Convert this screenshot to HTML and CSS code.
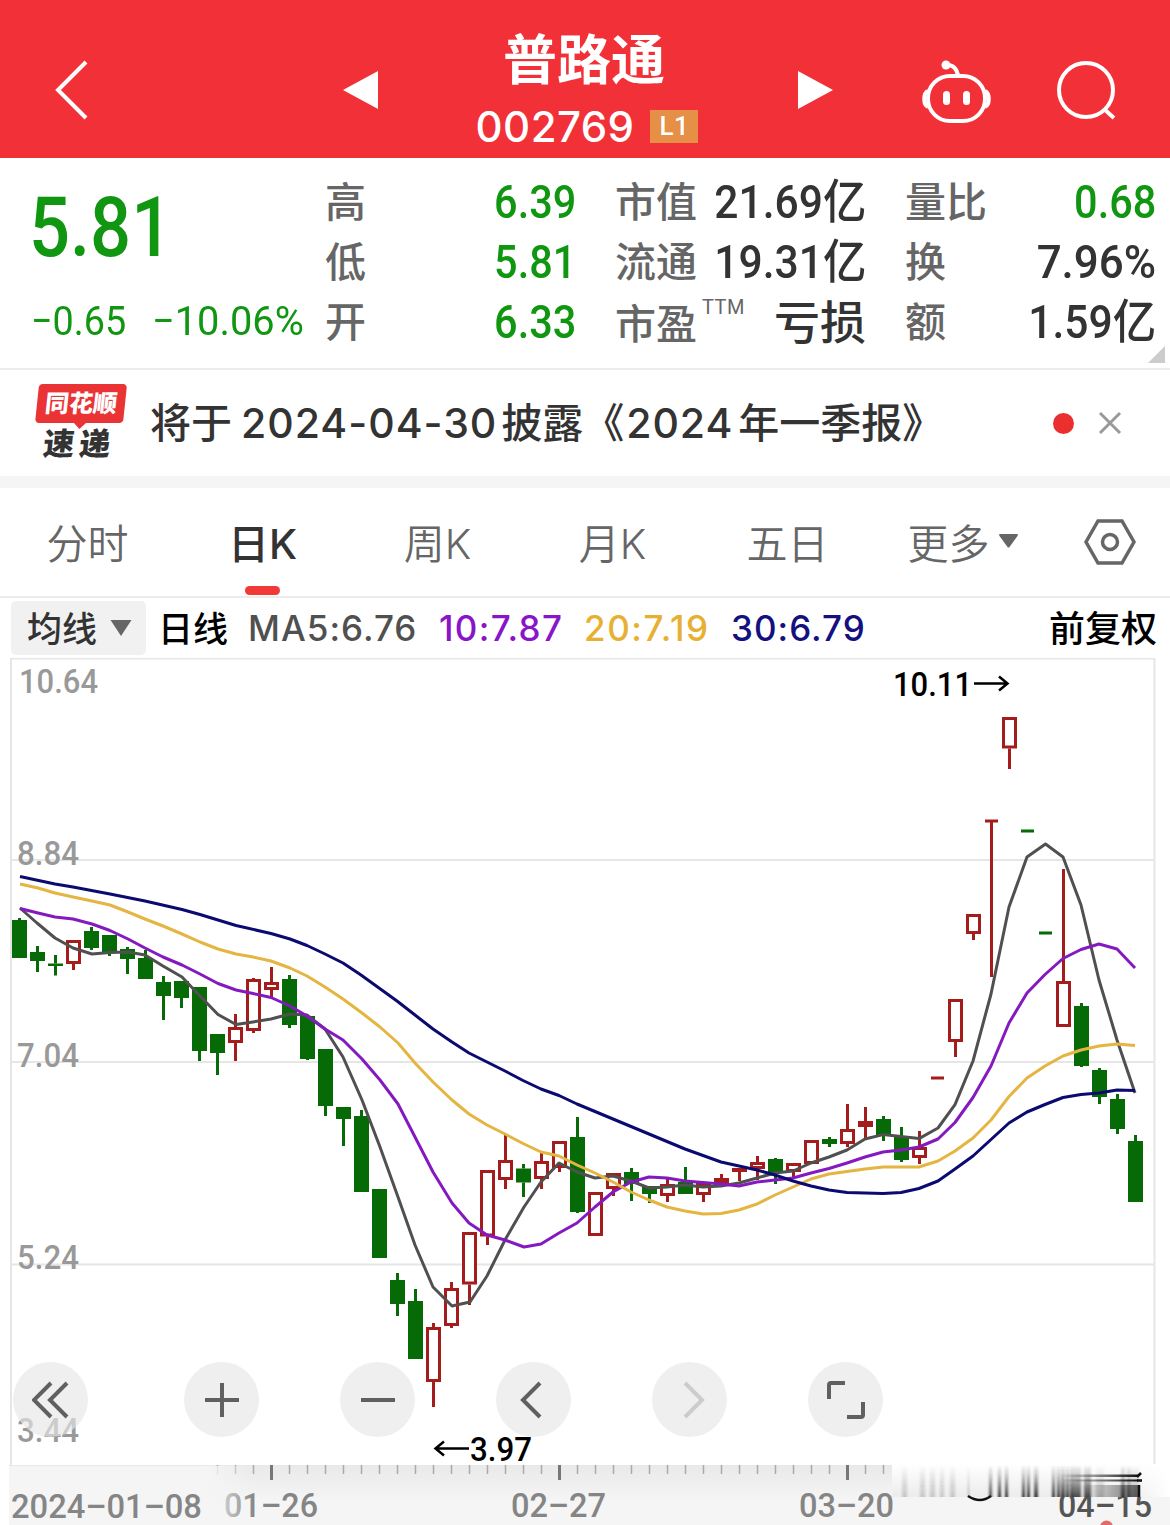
FILE: index.html
```html
<!DOCTYPE html>
<html lang="zh-CN">
<head>
    <meta charset="UTF-8">
    <meta name="viewport" content="width=device-width, initial-scale=1.0">
    <title>普路通 002769</title>
    <link rel="stylesheet" href="styles.css">
</head>
<body>
    <header class="top-bar">
        <svg class="icon-back" width="34" height="60" viewBox="0 0 34 60"><path d="M31 2 L3 30 L31 58"/></svg>
        <svg class="icon-prev" width="35" height="40" viewBox="0 0 35 40"><path d="M0 20 L35 1 V39 Z"/></svg>
        <div class="stock">
            <h1 class="stock-name">普路通</h1>
            <div class="stock-code"><span>002769</span><span class="level-badge">L1</span></div>
        </div>
        <svg class="icon-next" width="35" height="40" viewBox="0 0 35 40"><path d="M35 20 L0 1 V39 Z"/></svg>
        <svg class="icon-robot" width="72" height="66" viewBox="0 0 72 66">
            <path d="M25 6 C32 6 35 10 36 17"/>
            <rect x="6" y="17" width="57" height="45" rx="22"/>
            <path d="M6 32 C1 34 1 46 6 48 M63 32 C68 34 68 46 63 48"/>
            <circle class="fill" cx="24" cy="6" r="4.5"/>
            <rect class="fill" x="21" y="32" width="7" height="14" rx="3.5"/>
            <rect class="fill" x="41" y="32" width="7" height="14" rx="3.5"/>
        </svg>
        <svg class="icon-search" width="62" height="62" viewBox="0 0 62 62"><circle cx="29" cy="30" r="27"/><path d="M47 49 L57 58"/></svg>
    </header>

    <section class="quote">
        <div class="price-box">
            <div class="price">5.81</div>
            <div class="change"><span class="change-value">−0.65</span><span class="change-rate">−10.06%</span></div>
        </div>
        <div class="quote-col">
            <div class="quote-row"><span class="label">高</span><span class="num green">6.39</span></div>
            <div class="quote-row"><span class="label">低</span><span class="num green">5.81</span></div>
            <div class="quote-row"><span class="label">开</span><span class="num green">6.33</span></div>
        </div>
        <div class="quote-col">
            <div class="quote-row"><span class="label">市值</span><span class="num wide">21.69<i>亿</i></span></div>
            <div class="quote-row"><span class="label">流通</span><span class="num wide">19.31<i>亿</i></span></div>
            <div class="quote-row"><span class="label pe">市盈<sup>TTM</sup></span><span class="text">亏损</span></div>
        </div>
        <div class="quote-col">
            <div class="quote-row"><span class="label">量比</span><span class="num green">0.68</span></div>
            <div class="quote-row"><span class="label">换</span><span class="num percent">7.96%</span></div>
            <div class="quote-row"><span class="label">额</span><span class="num wide">1.59<i>亿</i></span></div>
        </div>
        <span class="corner"></span>
    </section>

    <section class="notice">
        <div class="notice-logo">
            <div class="logo-top">同花顺</div>
            <div class="logo-bottom">速递</div>
        </div>
        <p class="notice-text">将于<b class="date">2024-04-30</b>披露《<b class="year">2024</b>年一季报》</p>
        <span class="dot"></span>
        <svg class="icon-close" width="24" height="24" viewBox="0 0 24 24"><path d="M2 2 L22 22 M22 2 L2 22"/></svg>
    </section>

    <nav class="tabs">
        <a class="tab">分时</a>
        <a class="tab active">日K</a>
        <a class="tab">周K</a>
        <a class="tab">月K</a>
        <a class="tab">五日</a>
        <a class="tab">更多<svg width="19" height="14" viewBox="0 0 19 14"><path d="M1 0 H18 Q19.500 0 18.500 2 L10.500 13 Q9.500 14 8.500 13 L0.500 2 Q-0.500 0 1 0 Z"/></svg></a>
        <svg class="icon-setting" width="52" height="46" viewBox="0 0 52 46"><path d="M14 2 H38 L50 23 L38 44 H14 L2 23 Z"/><circle cx="26" cy="23" r="7.500"/></svg>
    </nav>

    <div class="ma-bar">
        <button class="ma-select"><span>均线</span><svg width="22" height="16" viewBox="0 0 22 16"><path d="M0.500 0 H21.500 L11 16 Z"/></svg></button>
        <span class="period">日线</span>
        <span class="ma ma5">MA5:6.76</span>
        <span class="ma ma10">10:7.87</span>
        <span class="ma ma20">20:7.19</span>
        <span class="ma ma30">30:6.79</span>
        <span class="adjust">前复权</span>
    </div>

    <main class="chart">
        <svg class="kline" width="1170" height="867" viewBox="0 658 1170 867">
            <defs>
                <linearGradient id="axisBg" x1="0" y1="0" x2="0" y2="1">
                    <stop offset="0" stop-color="#e9e9e9"/>
                    <stop offset="0.6" stop-color="#f5f5f5"/>
                </linearGradient>
                <linearGradient id="axisLeft" x1="0" y1="0" x2="1" y2="0">
                    <stop offset="0.8" stop-color="#f5f5f5"/>
                    <stop offset="1" stop-color="#f5f5f5" stop-opacity="0"/>
                </linearGradient>
                <linearGradient id="smear" x1="0" y1="0" x2="0" y2="1">
                    <stop offset="0" stop-color="#222" stop-opacity="0"/>
                    <stop offset="0.4" stop-color="#222" stop-opacity="0.35"/>
                    <stop offset="1" stop-color="#222"/>
                </linearGradient>
                <linearGradient id="smearBg" x1="0" y1="0" x2="0" y2="1">
                    <stop offset="0" stop-color="#fff"/>
                    <stop offset="1" stop-color="#ececec"/>
                </linearGradient>
                <linearGradient id="smearEnd" x1="0" y1="0" x2="1" y2="0">
                    <stop offset="0" stop-color="#fff" stop-opacity="0"/>
                    <stop offset="1" stop-color="#fff"/>
                </linearGradient>
                <linearGradient id="smearLine" x1="0" y1="0" x2="1" y2="0">
                    <stop offset="0" stop-color="#222" stop-opacity="0"/>
                    <stop offset="1" stop-color="#111"/>
                </linearGradient>
                <filter id="soft" x="-5%" width="110%"><feGaussianBlur stdDeviation="0.9 0"/></filter>
            </defs>

            <rect x="9" y="1465" width="1161" height="60" fill="url(#axisBg)"/>
            <g class="grid">
                <path d="M11 1465 V658.500 H1154.500 V1465"/>
                <path d="M11 860 H1154 M11 1062 H1154 M11 1264.500 H1154"/>
            </g>
            <g class="y-label">
                <text x="19" y="693" textLength="79" lengthAdjust="spacingAndGlyphs">10.64</text>
                <text x="17" y="865" textLength="62" lengthAdjust="spacingAndGlyphs">8.84</text>
                <text x="17" y="1067" textLength="62" lengthAdjust="spacingAndGlyphs">7.04</text>
                <text x="17" y="1269" textLength="62" lengthAdjust="spacingAndGlyphs">5.24</text>
                <text x="17" y="1441.500" textLength="62" lengthAdjust="spacingAndGlyphs">3.44</text>
            </g>

            <g id="candles"></g>

            <polyline class="line line5" points="20,908 37,923 55,938 73,948 92,954 110,952.500 128,952 145,955 163,966 182,977 200,996 218,1014.500 236,1024.500 253,1022 271,1019 290,1014 307,1015 325,1029 343,1057 362,1100 380,1147 398,1197 415,1245 433,1287 452,1306 470,1302 487,1276 505,1240 524,1207 541,1182 559,1163 577,1172 595,1178 613,1176 631,1181 649,1188 667,1187 685,1185 703,1187 721,1186 739,1183 757,1178 775,1173 793,1171 811,1163 829,1157 847,1150 865,1139 883,1134.600 901,1136.500 919,1138.600 938,1128 955,1104.600 973,1061 991,994 1009,907 1027,857 1045.500,844 1063,857 1081,905 1099,980 1117,1040 1135,1093"/>
            <polyline class="line line10" points="20,908.500 38,913 55,917 73,919 92,924 110,930.500 128,939 145,948 163,957 182,965 200,974 218,983.500 236,990 253,993.500 271,997.500 290,1006 307,1016 325,1029 343,1040 362,1059 380,1080 398,1104 415,1137 433,1172 452,1203 469,1223 487,1235 505,1240 524,1247 541,1244 559,1233 577,1223 595,1207 613,1192 631,1182 649,1177 667,1178 685,1181 703,1182.500 721,1184 739,1186 757,1182 775,1180 793,1178 811,1173 829,1168.500 847,1163 865,1157 883,1152 901,1150 919,1147 938,1139 955,1122.500 973,1097.500 991,1066 1009,1023 1027,993 1045,974.500 1063,958.500 1081,949.500 1099,944 1117,949 1135,968"/>
            <polyline class="line line20" points="20,884 38,888 55,893 73,897 92,901 110,905 128,912 145,919 163,926 182,934 200,942 218,949 236,954 253,957 271,961 290,968 307,976 325,987 343,999 362,1013 380,1027 398,1043 415,1063 433,1082 452,1100 469,1114 487,1125 505,1134 523,1143.500 541,1152 559,1156 577,1165 595,1173 613,1182 631,1192 649,1200 667,1207 685,1211 703,1214 721,1213.500 739,1210 757,1204 775,1195 793,1187 811,1179 829,1174 847,1171.500 865,1169 883,1167 901,1167 919,1167 938,1161 955,1151 973,1138 991,1120 1009,1096.500 1027,1078 1045,1066 1063,1056 1081,1050 1099,1046 1117,1044 1135,1045.500"/>
            <polyline class="line line30" points="20,876.500 55,884 73,887 110,894 145,901 182,909.500 200,914.500 218,920 236,925.500 271,933.500 290,939 307,945.500 325,954 343,963 361,975 379,988 397,1001 415,1015 433,1029 452,1042 469,1053 487,1062 505,1071 523,1080.500 541,1089 559,1095.500 577,1104 613,1119 649,1134 685,1149 721,1162 757,1170 775,1175 793,1181 811,1186 829,1190 847,1192.500 883,1193.500 901,1192.500 919,1188.500 938,1181 955,1169 973,1156 991,1139.500 1009,1123 1027,1112 1045,1104.500 1063,1097.500 1081,1094.500 1099,1093 1117,1090 1135,1090.500"/>

            <g class="mark">
                <text x="893" y="696" textLength="79" lengthAdjust="spacingAndGlyphs">10.11</text>
                <path d="M974 683.500 H1007 M999 676.500 L1007.500 683.500 L999 690.500"/>
                <text x="470" y="1461" textLength="62" lengthAdjust="spacingAndGlyphs">3.97</text>
                <path d="M469 1448.500 H436 M444 1441.500 L435.500 1448.500 L444 1455.500"/>
            </g>

            <g id="ticks"></g>
            <g class="x-label">
                <text x="224" y="1517" textLength="94" lengthAdjust="spacingAndGlyphs">01–26</text>
                <text x="511" y="1517" textLength="95" lengthAdjust="spacingAndGlyphs">02–27</text>
                <text x="799" y="1517" textLength="95" lengthAdjust="spacingAndGlyphs">03–20</text>
            </g>
            <rect x="9" y="1466" width="246" height="59" fill="url(#axisLeft)"/>
            <text class="x-label" x="11" y="1517.500" textLength="191" lengthAdjust="spacingAndGlyphs">2024–01–08</text>
            <text class="x-label dark" x="1058" y="1517" textLength="94" lengthAdjust="spacingAndGlyphs">04–15</text>

            <rect x="892" y="1464" width="278" height="33" fill="url(#smearBg)"/>
            <rect x="1130" y="1464" width="40" height="33" fill="url(#smearEnd)"/>
            <g id="smears" filter="url(#soft)"></g>
            <path d="M968 1496 Q980 1504 991 1496" fill="none" stroke="#111" stroke-width="2.500"/>
            <g fill="url(#smearLine)">
                <rect x="1060" y="1474.500" width="78" height="2.500"/>
                <rect x="1060" y="1479.500" width="78" height="2"/>
                <rect x="1080" y="1485" width="60" height="12" opacity="0.6"/>
            </g>
            <path d="M1137 1477 L1141 1473 M1137 1480.500 H1142 M1139 1485 V1497" stroke="#111" stroke-width="2.500"/>
            <circle cx="1106.500" cy="1527" r="6.500" fill="#e36a68"/>
        </svg>

        <div class="controls">
            <button class="ctrl first"><svg width="38" height="38" viewBox="0 0 38 38"><path d="M19 2 L2 19 L19 36 M35 2 L18 19 L35 36"/></svg></button>
            <button class="ctrl"><svg width="38" height="38" viewBox="0 0 38 38"><path d="M2 19 H36 M19 2 V36"/></svg></button>
            <button class="ctrl"><svg width="38" height="38" viewBox="0 0 38 38"><path d="M2 19 H36"/></svg></button>
            <button class="ctrl"><svg width="38" height="38" viewBox="0 0 38 38"><path d="M25 2 L8 19 L25 36"/></svg></button>
            <button class="ctrl disabled"><svg width="38" height="38" viewBox="0 0 38 38"><path d="M14 2 L31 19 L14 36"/></svg></button>
            <button class="ctrl"><svg width="38" height="38" viewBox="0 0 38 38"><path d="M2 18 V4 Q2 2 4 2 H18 M20 36 H34 Q36 36 36 34 V21"/></svg></button>
        </div>
    </main>

    <script>
        const NS = 'http://www.w3.org/2000/svg';
        const START = 19.5;
        const STEP = 18;

        // [direction, high, body top, body bottom, low]
        const candles = [
            ['g', 918, 920, 958, 958], ['g', 946, 952, 961, 972], ['g', 955, 963.5, 966, 975.5],
            ['r', 940, 940, 964, 970], ['g', 927, 931, 948, 950], ['g', 935, 935, 953, 956],
            ['g', 947, 949, 959, 974], ['g', 950, 958, 979, 979], ['g', 976, 982, 996, 1020],
            ['g', 981, 981, 998, 1008], ['g', 987, 987, 1051, 1061], ['g', 1034, 1034, 1053, 1075],
            ['r', 1014, 1027, 1043, 1061], ['r', 978, 979, 1031, 1033], ['r', 967, 982, 990, 997],
            ['g', 975, 979, 1025, 1028], ['g', 1016, 1016, 1059, 1060], ['g', 1049, 1049, 1106, 1116],
            ['g', 1107, 1107, 1119, 1146], ['g', 1110, 1116, 1192, 1192], ['g', 1189, 1189, 1258, 1258],
            ['g', 1273, 1280, 1304, 1316], ['g', 1289, 1301, 1359, 1359], ['r', 1323, 1327, 1382, 1407],
            ['r', 1282, 1288, 1326, 1328], ['r', 1232, 1232, 1284.5, 1305], ['r', 1170, 1170, 1236.5, 1245],
            ['r', 1135, 1160, 1180, 1189], ['g', 1164, 1168.5, 1182.5, 1197], ['r', 1153, 1161, 1179, 1189],
            ['r', 1141, 1141, 1168, 1172], ['g', 1117, 1137, 1212, 1213], ['r', 1192, 1192, 1236, 1236],
            ['r', 1173, 1173, 1189, 1196], ['g', 1168, 1172, 1184, 1201], ['g', 1186, 1186, 1194, 1203],
            ['r', 1179, 1184, 1196, 1202], ['g', 1167, 1182, 1194, 1194], ['r', 1183, 1183, 1195, 1202],
            ['r', 1174, 1178, 1184, 1184], ['r', 1168, 1168, 1171, 1181], ['r', 1156, 1162, 1169, 1180],
            ['g', 1158, 1159, 1173, 1184], ['r', 1163, 1163, 1172, 1178], ['r', 1140, 1140, 1164, 1164],
            ['g', 1137, 1139, 1144, 1147], ['r', 1104, 1129, 1144, 1147], ['r', 1107, 1121, 1127, 1139],
            ['g', 1116, 1119, 1136, 1141], ['g', 1127, 1136, 1160, 1162], ['r', 1131, 1147, 1158, 1164],
            ['r', 1078, 1078, 1078, 1078], ['r', 999, 999, 1042, 1057], ['r', 914, 914, 934, 940],
            ['r', 821, 821, 821, 977], ['r', 717, 717, 748.5, 769], ['g', 831, 831, 831, 831],
            ['g', 933, 933, 933, 933], ['r', 869, 981, 1027, 1027], ['g', 1003, 1006, 1066, 1067],
            ['g', 1068, 1070, 1097, 1104], ['g', 1094, 1099, 1129, 1134], ['g', 1135, 1141, 1202, 1202]
        ];

        function addRect(parent, attrs) {
            const el = document.createElementNS(NS, 'rect');
            for (const key in attrs) el.setAttribute(key, attrs[key]);
            parent.appendChild(el);
        }

        const candleGroup = document.getElementById('candles');
        candles.forEach(function (c, i) {
            const [dir, high, top, bottom, low] = c;
            const x = START + STEP * i;
            const cls = dir === 'g' ? 'down' : 'up';
            if (high < top) addRect(candleGroup, { class: cls, x: x - 1.5, y: high, width: 3, height: top - high });
            if (low > bottom) addRect(candleGroup, { class: cls, x: x - 1.5, y: bottom, width: 3, height: low - bottom });
            if (top === bottom) {
                addRect(candleGroup, { class: cls, x: x - 6.5, y: top - 1.5, width: 13, height: 3 });
            } else if (dir === 'g') {
                addRect(candleGroup, { class: cls, x: x - 7.5, y: top, width: 15, height: bottom - top });
            } else {
                addRect(candleGroup, { class: 'up-body', x: x - 6, y: top + 1.5, width: 12, height: Math.max(bottom - top - 3, 1) });
            }
        });

        // Axis ticks, long ones stand at the labelled days
        const tickGroup = document.getElementById('ticks');
        for (let i = 11; i < 49; i++) {
            const major = i === 14 || i === 30 || i === 46;
            const w = major ? 3 : 1.5;
            addRect(tickGroup, { class: major ? 'tick major' : 'tick', x: START + STEP * i - w / 2, y: 1465, width: w, height: major ? 15 : 9 });
        }

        // [x, width, opacity]
        const smears = [
            [902, 5, 0.2], [920, 5, 0.2], [930, 5, 0.2], [940, 4, 0.2], [950, 5, 0.2], [968, 1, 0.4],
            [989, 3, 0.8], [998, 3, 0.9], [1005, 3, 0.9], [1022, 3, 0.9], [1027, 3, 0.9], [1034, 4, 0.9],
            [1052, 3, 0.9], [1057, 3, 0.9], [1061, 4, 0.9], [1066, 3, 0.9], [1070, 3, 0.9], [1073, 8, 0.8],
            [1084, 7, 0.8], [1096, 8, 0.2], [1121, 4, 0.8], [1127, 3, 0.7], [1130, 9, 0.3]
        ];
        const smearGroup = document.getElementById('smears');
        smears.forEach(function (s) {
            addRect(smearGroup, { x: s[0], y: 1465, width: s[1], height: 32, fill: 'url(#smear)', opacity: s[2] });
        });
    </script>
</body>
</html>
```
FILE: styles.css
```css
* {
    margin: 0;
    padding: 0;
    box-sizing: border-box;
}

body {
    width: 1170px;
    height: 1525px;
    overflow: hidden;
    background: #fff;
    color: #333;
    font-family: Inter, "Noto Sans CJK SC", sans-serif;
}

svg {
    display: block;
    flex: none;
}

button {
    border: none;
    font-family: inherit;
}

/* Header */
.top-bar {
    display: flex;
    height: 158px;
    background: #f13037;
    color: #fff;
}

.top-bar svg {
    fill: none;
    stroke: #fff;
    stroke-width: 4;
}

.icon-back {
    margin: 60px 0 0 55px;
}

.top-bar .icon-prev,
.top-bar .icon-next {
    margin-top: 70px;
    fill: #fff;
    stroke: none;
}

.icon-prev {
    margin-left: 254px;
}

.stock {
    width: 420px;
    padding-top: 27px;
    padding-right: 8px;
    text-align: center;
}

.stock-name {
    font-size: 54px;
    font-weight: 700;
    line-height: 68px;
}

.stock-code {
    display: flex;
    justify-content: center;
    align-items: center;
    gap: 16px;
    height: 62px;
    padding-left: 6px;
    font-size: 42px;
    font-weight: 500;
    letter-spacing: 0.4px;
}

.level-badge {
    width: 48px;
    height: 33px;
    background: #e58f47;
    font-family: Roboto, sans-serif;
    font-size: 26px;
    line-height: 33px;
}

.icon-robot {
    margin: 59px 0 0 89px;
}

.top-bar .icon-robot .fill {
    fill: #fff;
    stroke: none;
}

.icon-search {
    margin: 60px 0 0 63px;
}

/* Quote */
.quote {
    position: relative;
    display: grid;
    grid-template-columns: 292px 251px 251px 251px;
    column-gap: 39px;
    height: 212px;
    padding: 14px 0 0 33px;
    border-bottom: 2px solid #ececec;
}

.price-box {
    color: #119611;
    font-family: Roboto, sans-serif;
}

.quote-col {
    width: 251px;
    margin-left: -39px;
}

.price {
    width: 170px;
    height: 119px;
    margin-left: -4px;
    font-size: 83px;
    font-weight: 500;
    line-height: 111px;
    transform: scaleX(0.87);
    transform-origin: left;
}

.change {
    display: flex;
    height: 60px;
    font-size: 41px;
    line-height: 60px;
    white-space: nowrap;
}

.change span {
    width: 120px;
    margin-left: -2px;
    transform: scaleX(0.92);
    transform-origin: left;
}

.change .change-rate {
    margin-left: 1px;
    transform: scaleX(0.97);
}

.quote-row {
    display: flex;
    justify-content: space-between;
    height: 60px;
    line-height: 60px;
    white-space: nowrap;
}

.label {
    color: #666;
    font-size: 41px;
    font-weight: 500;
}

.label.pe {
    padding-top: 2px;
}

.label sup {
    margin-left: 5px;
    font-family: Roboto, sans-serif;
    font-size: 20px;
    font-weight: 400;
    letter-spacing: 0.5px;
    line-height: 0;
    vertical-align: 25px;
}

.num {
    font-family: Roboto, "Noto Sans CJK SC", sans-serif;
    font-size: 46px;
    font-weight: 500;
    transform: scaleX(0.9);
    transform-origin: right;
}

.num.wide {
    transform: scaleX(0.925);
}

.num.percent {
    transform: scaleX(0.955);
}

.num i {
    font-size: 47px;
    font-style: normal;
}

.text {
    font-size: 46px;
    font-weight: 500;
}

.green {
    color: #119611;
}

.corner {
    position: absolute;
    right: 5px;
    bottom: 5px;
    border-left: 17px solid transparent;
    border-bottom: 17px solid #ccc;
}

/* Notice */
.notice {
    display: flex;
    align-items: center;
    height: 118px;
    padding-left: 35px;
    border-bottom: 12px solid #f5f5f5;
}

.notice-logo {
    width: 88px;
    height: 78px;
    margin-right: 4px;
    font-weight: 900;
    text-align: center;
    transform: skewX(-6deg);
}

.logo-top {
    position: relative;
    height: 39px;
    border-radius: 4px;
    background: #e93335;
    color: #fff;
    font-size: 24px;
    line-height: 39px;
}

.logo-top::after {
    content: '';
    position: absolute;
    top: 38px;
    left: 38px;
    border: 7px solid transparent;
    border-top-color: #e93335;
}

.logo-bottom {
    font-size: 31px;
    letter-spacing: 5px;
    line-height: 42px;
    text-indent: 5px;
}

.notice-text {
    width: 926px;
    padding-left: 23px;
    padding-bottom: 6px;
    font-size: 41px;
    font-weight: 500;
    white-space: nowrap;
}

.notice-text b {
    font-weight: 500;
}

.date {
    margin: 0 4px 0 9px;
    letter-spacing: 1px;
}

.year {
    margin: 0 5px 0 2px;
    letter-spacing: 0.9px;
}

.dot {
    width: 21px;
    height: 21px;
    border-radius: 50%;
    background: #ea2f2f;
}

.icon-close {
    margin-left: 24px;
    stroke: #999;
    stroke-width: 3;
}

/* Tabs */
.tabs {
    display: grid;
    grid-template-columns: repeat(6, 175px) 120px;
    height: 110px;
    border-bottom: 2px solid #ececec;
}

.tab {
    position: relative;
    display: flex;
    justify-content: center;
    align-items: center;
    gap: 9px;
    padding-bottom: 3px;
    color: #666;
    font-size: 41px;
    font-weight: 350;
}

.tab svg {
    fill: #666;
}

.tab.active {
    color: #333;
    font-weight: 500;
}

.tab.active::after {
    content: '';
    position: absolute;
    bottom: 1px;
    left: 70px;
    width: 35px;
    height: 9px;
    border-radius: 5px;
    background: #f13a37;
}

.icon-setting {
    margin: 31px 0 0 34px;
    fill: none;
    stroke: #666;
    stroke-width: 3.5;
}

/* Moving averages */
.ma-bar {
    display: flex;
    align-items: center;
    height: 60px;
    padding: 0 13px 0 11px;
    font-size: 35px;
    font-weight: 500;
    white-space: nowrap;
}

.ma-select {
    display: flex;
    align-items: center;
    gap: 13px;
    width: 135px;
    height: 54px;
    padding-left: 16px;
    border-radius: 5px;
    background: #f1f1f1;
    color: #333;
    font-size: 35px;
    font-weight: 500;
}

.ma-select span,
.period,
.adjust {
    padding-bottom: 4px;
}

.ma-select svg {
    fill: #666;
}

.period {
    width: 102px;
    padding-left: 12px;
    color: #000;
}

.ma {
    letter-spacing: 1px;
}

.ma5 {
    width: 191px;
    color: #505050;
}

.ma10 {
    width: 145px;
    color: #8a14c8;
    letter-spacing: 1.3px;
}

.ma20 {
    width: 147px;
    color: #e8b032;
    letter-spacing: 1.6px;
}

.ma30 {
    color: #14107e;
}

.adjust {
    margin-left: auto;
    color: #000;
    font-size: 36px;
}

/* Chart */
.chart {
    position: relative;
    height: 867px;
}

.grid {
    fill: none;
    stroke: #e6e6e6;
    stroke-width: 2;
}

.y-label,
.x-label,
.mark {
    font-family: Roboto, sans-serif;
    font-size: 34px;
}

.y-label {
    fill: #999;
    font-weight: 500;
}

.x-label {
    fill: #858585;
    font-weight: 500;
}

.x-label.dark {
    fill: #555;
}

.mark text {
    fill: #000;
    font-weight: 500;
}

.mark path {
    fill: none;
    stroke: #000;
    stroke-width: 2.5;
}

.down {
    fill: #066a06;
}

.up {
    fill: #a51c1c;
}

.up-body {
    fill: #fff;
    stroke: #a51c1c;
    stroke-width: 3;
}

.line {
    fill: none;
    stroke-width: 3;
    stroke-linejoin: round;
}

.line5 {
    stroke: #505050;
}

.line10 {
    stroke: #8519c0;
}

.line20 {
    stroke: #e4b540;
}

.line30 {
    stroke: #0a0a70;
}

.tick {
    fill: #aaa;
}

.tick.major {
    fill: #777;
}

.controls {
    position: absolute;
    top: 704px;
    left: 13px;
    display: flex;
    gap: 81px;
}

.ctrl {
    display: flex;
    justify-content: center;
    align-items: center;
    width: 75px;
    height: 75px;
    border-radius: 50%;
    background: rgba(230, 230, 230, 0.65);
}

.ctrl.first {
    margin-right: 15px;
}

.ctrl svg {
    fill: none;
    stroke: #606060;
    stroke-width: 4;
}

.ctrl.disabled svg {
    stroke: #ccc;
}
```
